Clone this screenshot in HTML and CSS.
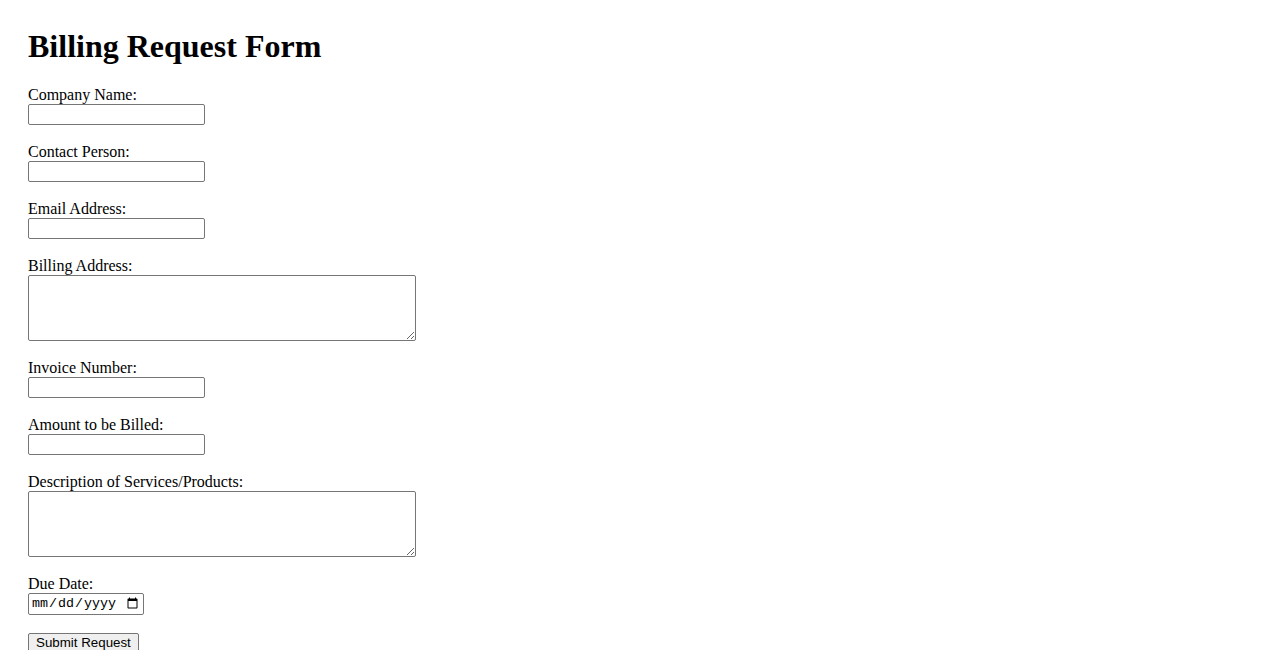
FILE: index.html
```html
<!DOCTYPE html>
<html lang="en">
<head>
<meta charset="utf-8">
<title>Billing Request Form</title>
<link rel="stylesheet" href="styles.css">
</head>
<body>
<h1 class="title">Billing Request Form</h1>
<form class="form">
<label for="company">Company Name:</label><br>
<input class="field" type="text" id="company" name="company"><br><br>
<label for="contact">Contact Person:</label><br>
<input class="field" type="text" id="contact" name="contact"><br><br>
<label for="email">Email Address:</label><br>
<input class="field" type="email" id="email" name="email"><br><br>
<label for="address">Billing Address:</label><br>
<textarea class="area" id="address" name="address"></textarea><br><br>
<label for="invoice">Invoice Number:</label><br>
<input class="field" type="text" id="invoice" name="invoice"><br><br>
<label for="amount">Amount to be Billed:</label><br>
<input class="field" type="text" id="amount" name="amount"><br><br>
<label for="desc">Description of Services/Products:</label><br>
<textarea class="area" id="desc" name="desc"></textarea><br><br>
<label for="due">Due Date:</label><br>
<input class="date" type="date" id="due" name="due"><br><br>
<button class="submit" type="submit">Submit Request</button>
</form>
</body>
</html>
```
FILE: styles.css
```css
body {
  margin: 28px;
  font-family: "Liberation Serif", "Times New Roman", serif;
  font-size: 16px;
  color: #000;
  background: #fff;
}
.title {
  font-size: 32px;
  font-weight: bold;
  margin: 0 0 21px;
}
.form {
  margin: 0;
}
.field {
  box-sizing: border-box;
  width: 177px;
  height: 21px;
  font: 13.33px "Liberation Sans", Arial, sans-serif;
  border: 1px solid #767676;
  border-radius: 2px;
  padding: 1px 2px;
  margin: 0;
}
.area {
  box-sizing: border-box;
  width: 388px;
  height: 66px;
  font: 13.33px "Liberation Mono", monospace;
  border: 1px solid #767676;
  border-radius: 2px;
  padding: 2px;
  margin: 0;
  vertical-align: bottom;
}
.date {
  box-sizing: border-box;
  width: 116px;
  height: 22px;
  font: 13.33px "Liberation Mono", monospace;
  border: 1px solid #767676;
  border-radius: 2px;
  padding: 1px 2px;
  margin: 0;
}
.submit {
  font: 13.33px "Liberation Sans", Arial, sans-serif;
  padding: 1px 7px;
  border: 1px solid #767676;
  border-radius: 2px;
  background: #efefef;
  color: #000;
  margin: 0;
}
```
